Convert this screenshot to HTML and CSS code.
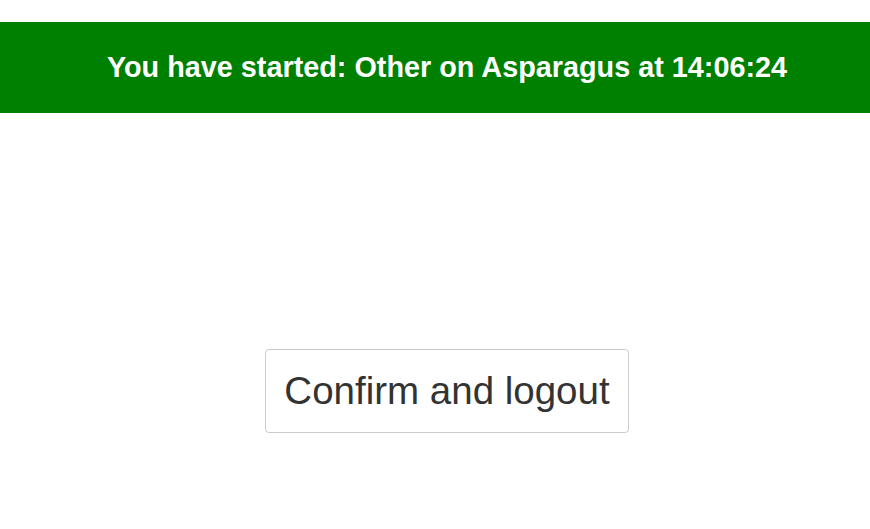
FILE: index.html
```html
<!DOCTYPE html>
<html>
<head>
<meta charset="utf-8">
<link rel="stylesheet" href="styles.css">
</head>
<body>
<div class="banner">
  <h3 class="banner-text">You have started: Other on Asparagus at 14:06:24</h3>
</div>
<div class="actions">
  <button class="btn">Confirm and logout</button>
</div>
</body>
</html>
```
FILE: styles.css
```css
html, body {
  margin: 0;
  padding: 0;
  background: #fff;
  font-family: "Liberation Sans", Arial, sans-serif;
}
.banner {
  margin-top: 22px;
  height: 91px;
  background: #008000;
  display: flex;
  align-items: center;
  justify-content: center;
  padding-left: 24px;
}
.banner-text {
  margin: 0;
  color: #fff;
  font-weight: bold;
  font-size: 28.8px;
}
.actions {
  display: flex;
  justify-content: center;
  padding-left: 24px;
  margin-top: 236px;
}
.btn {
  font-family: "Liberation Sans", Arial, sans-serif;
  font-size: 38.5px;
  color: #333;
  background: #fff;
  border: 1px solid #ccc;
  border-radius: 4px;
  padding: 0 18px;
  height: 84px;
}
```
